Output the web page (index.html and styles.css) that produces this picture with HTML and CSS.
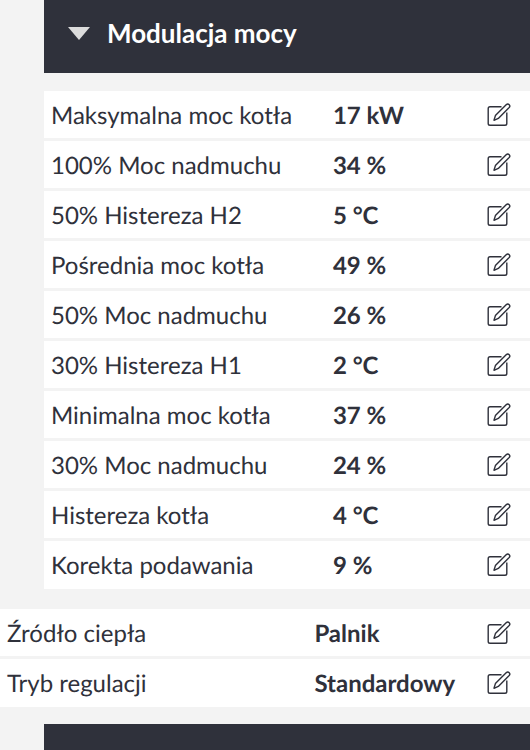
FILE: index.html
```
<!DOCTYPE html>
<html lang="pl">
<head>
  <meta charset="UTF-8" />
  <meta name="viewport" content="width=device-width, initial-scale=1.0"/>
  <title>Modulacja mocy</title>
  <link rel="stylesheet" href="styles.css">
</head>
<body>
  <svg class="sprite" aria-hidden="true">
    <symbol id="edit" viewBox="0 0 24 24">
      <path d="M14.5 3.8H3Q1.2 3.8 1.2 5.6V20.5Q1.2 22.3 3 22.3H18Q19.8 22.3 19.8 20.5V9.5" />
      <path d="M7 17.3L8.4 12.6L19.4 1.6Q20.8 .4 22.2 1.7Q23.5 3 22.2 4.4L11.3 15.4Z" />
    </symbol>
  </svg>

  <section class="section">
    <button class="section-header" id="modulation" type="button" aria-expanded="true">
      <svg class="arrow" viewBox="0 0 22 13" aria-hidden="true"><path d="M0 0H22L11 13Z" /></svg>
      <span>Modulacja mocy</span>
    </button>

    <table class="params" id="modulationParams">
      <tbody>
        <tr><th scope="row">Maksymalna moc kotła</th><td>17 kW</td><td class="action"><button type="button" aria-label="Edytuj: Maksymalna moc kotła"><svg><use href="#edit" /></svg></button></td></tr>
        <tr><th scope="row">100% Moc nadmuchu</th><td>34 %</td><td class="action"><button type="button" aria-label="Edytuj: 100% Moc nadmuchu"><svg><use href="#edit" /></svg></button></td></tr>
        <tr><th scope="row">50% Histereza H2</th><td>5 °C</td><td class="action"><button type="button" aria-label="Edytuj: 50% Histereza H2"><svg><use href="#edit" /></svg></button></td></tr>
        <tr><th scope="row">Pośrednia moc kotła</th><td>49 %</td><td class="action"><button type="button" aria-label="Edytuj: Pośrednia moc kotła"><svg><use href="#edit" /></svg></button></td></tr>
        <tr><th scope="row">50% Moc nadmuchu</th><td>26 %</td><td class="action"><button type="button" aria-label="Edytuj: 50% Moc nadmuchu"><svg><use href="#edit" /></svg></button></td></tr>
        <tr><th scope="row">30% Histereza H1</th><td>2 °C</td><td class="action"><button type="button" aria-label="Edytuj: 30% Histereza H1"><svg><use href="#edit" /></svg></button></td></tr>
        <tr><th scope="row">Minimalna moc kotła</th><td>37 %</td><td class="action"><button type="button" aria-label="Edytuj: Minimalna moc kotła"><svg><use href="#edit" /></svg></button></td></tr>
        <tr><th scope="row">30% Moc nadmuchu</th><td>24 %</td><td class="action"><button type="button" aria-label="Edytuj: 30% Moc nadmuchu"><svg><use href="#edit" /></svg></button></td></tr>
        <tr><th scope="row">Histereza kotła</th><td>4 °C</td><td class="action"><button type="button" aria-label="Edytuj: Histereza kotła"><svg><use href="#edit" /></svg></button></td></tr>
        <tr><th scope="row">Korekta podawania</th><td>9 %</td><td class="action"><button type="button" aria-label="Edytuj: Korekta podawania"><svg><use href="#edit" /></svg></button></td></tr>
      </tbody>
    </table>
  </section>

  <table class="params general">
    <tbody>
      <tr><th scope="row">Źródło ciepła</th><td>Palnik</td><td class="action"><button type="button" aria-label="Edytuj: Źródło ciepła"><svg><use href="#edit" /></svg></button></td></tr>
      <tr><th scope="row">Tryb regulacji</th><td>Standardowy</td><td class="action"><button type="button" aria-label="Edytuj: Tryb regulacji"><svg><use href="#edit" /></svg></button></td></tr>
    </tbody>
  </table>

  <div class="section footer-bar"></div>

  <script>
    const header = document.getElementById('modulation');

    header.addEventListener('click', function() {
      const params = document.getElementById('modulationParams');
      params.hidden = !params.hidden;
      header.setAttribute('aria-expanded', String(!params.hidden));
    });
  </script>
</body>
</html>
```
FILE: styles.css
```
* {
  margin: 0;
  padding: 0;
  box-sizing: border-box;
}

body {
  background-color: #f3f3f3;
  color: #2f313b;
  font-family: Lato, sans-serif;
  font-size: 24px;
  line-height: 32px;
  text-rendering: geometricPrecision;
}

button {
  border: none;
  background: none;
  color: inherit;
  font: inherit;
  cursor: pointer;
}

.sprite {
  display: none;
}

.section {
  margin-left: 44px;
}

.section-header {
  display: flex;
  align-items: center;
  gap: 17px;
  width: 100%;
  padding: 17px 24px 24px;
  margin-bottom: 18px;
  background-color: #2f313b;
  color: #fff;
  font-size: 26px;
  font-weight: bold;
}

.arrow {
  width: 22px;
  height: 13px;
  fill: #dcdcdc;
}

.section-header[aria-expanded="false"] .arrow {
  transform: rotate(-90deg);
}

.params {
  width: 100%;
  table-layout: fixed;
  border-spacing: 0;
}

.params[hidden] {
  display: none;
}

.params th,
.params td {
  height: 50px;
  padding: 2px 7px 0;
  background-color: #fff;
  border-bottom: 3px solid #f3f3f3;
  text-align: left;
  white-space: nowrap;
}

.params tr:last-child th,
.params tr:last-child td {
  height: 48px;
  border-bottom: none;
}

.params th {
  width: 58%;
  font-weight: normal;
}

.params td {
  font-weight: bold;
}

.params .action {
  width: 64px;
  padding: 0 19px 0 0;
  text-align: right;
}

.action button {
  display: block;
  margin-left: auto;
}

.action svg {
  display: block;
  width: 24px;
  height: 24px;
  fill: none;
  stroke: #2f313b;
  stroke-width: 1.4;
  stroke-linejoin: round;
}

.general {
  margin: 20px 0 17px;
}

.footer-bar {
  height: 26px;
  background-color: #2f313b;
}
```
